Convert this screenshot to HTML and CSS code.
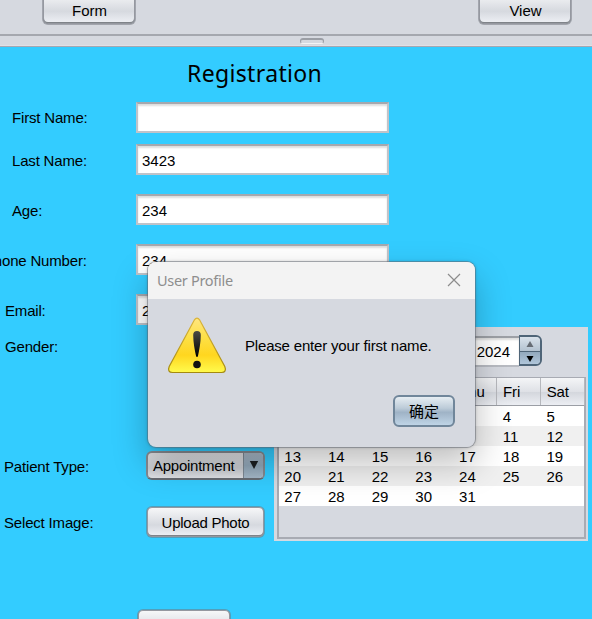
FILE: index.html
```
<!DOCTYPE html>
<html lang="en">
<head>
<meta charset="utf-8">
<title>Registration</title>
<link rel="stylesheet" href="styles.css">
</head>
<body>
<header class="toolbar">
  <button class="btn tool">Form</button>
  <button class="btn tool">View</button>
</header>
<div class="splitter"><span class="grip"></span></div>
<main class="form">
  <h1>Registration</h1>
  <div class="field first"><label class="in">First Name:</label><div class="input"></div></div>
  <div class="field last"><label class="in">Last Name:</label><div class="input">3423</div></div>
  <div class="field"><label class="in">Age:</label><div class="input">234</div></div>
  <div class="field"><label class="phone">Phone Number:</label><div class="input">234</div></div>
  <div class="field"><label class="email">Email:</label><div class="input">234</div></div>
  <div class="lower">
    <div class="options">
      <div class="option gender"><label>Gender:</label></div>
      <div class="option"><label>Patient Type:</label><div class="combo"><span>Appointment</span><i><svg width="10" height="10" viewBox="0 0 10 10"><path d="M.8 1h8.400L5 9z" fill="#1b1e22"/></svg></i></div></div>
      <div class="option photo"><label>Select Image:</label><button class="btn upload">Upload Photo</button></div>
    </div>
    <section class="calendar">
      <div class="year-row">
        <div class="year">2024</div>
        <div class="spinner">
          <span><svg width="8" height="6" viewBox="0 0 8 6"><path d="M4 0l3.500 6h-7z" fill="#666c74"/></svg></span>
          <span><svg width="8" height="6" viewBox="0 0 8 6"><path d="M4 6L.5 0h7z"/></svg></span>
        </div>
      </div>
      <div class="table">
        <div class="week head"><b></b><b></b><b></b><b></b><b>Thu</b><b>Fri</b><b>Sat</b></div>
        <div class="week"><b></b><b></b><b></b><b></b><b></b><b>4</b><b>5</b></div>
        <div class="week alt"><b></b><b></b><b></b><b></b><b></b><b>11</b><b>12</b></div>
        <div class="week"><b>13</b><b>14</b><b>15</b><b>16</b><b>17</b><b>18</b><b>19</b></div>
        <div class="week alt"><b>20</b><b>21</b><b>22</b><b>23</b><b>24</b><b>25</b><b>26</b></div>
        <div class="week"><b>27</b><b>28</b><b>29</b><b>30</b><b>31</b><b></b><b></b></div>
      </div>
    </section>
  </div>
  <button class="btn submit"></button>
</main>
<div class="dialog">
  <div class="titlebar"><span>User Profile</span><svg width="14" height="14" viewBox="0 0 14 14"><path d="M1 1l12 12M13 1L1 13" stroke="#8c8c8c" stroke-width="1.2" fill="none"/></svg></div>
  <div class="message">
    <svg width="60" height="58" viewBox="0 0 60 58">
      <defs>
        <linearGradient id="y" x1="0" y1="0" x2="0" y2="1"><stop offset="0" stop-color="#ffe680"/><stop offset=".35" stop-color="#fde047"/><stop offset=".68" stop-color="#ffd61f"/><stop offset="1" stop-color="#fffb4d"/></linearGradient>
        <linearGradient id="o" x1="0" y1="0" x2="0" y2="1"><stop offset="0" stop-color="#dcb53a"/><stop offset="1" stop-color="#a48a10"/></linearGradient>
        <linearGradient id="k" x1="0" y1="0" x2="0" y2="1"><stop offset="0" stop-color="#4b4a44"/><stop offset="1" stop-color="#000"/></linearGradient>
      </defs>
      <path d="M27.200 3.200Q30 -.8 32.800 3.200L57.800 49.500Q60 55.300 54.500 55.500H5.500Q0 55.300 2.200 49.500z" fill="url(#y)" stroke="url(#o)" stroke-width="1.2"/>
      <path d="M26.200 18Q26.200 14 30 14T33.800 18C33.800 26 32.200 33 30.800 39.800H29.200C27.800 33 26.200 26 26.200 18z" fill="url(#k)"/>
      <circle cx="30" cy="47.500" r="3.800" fill="#111"/>
    </svg>
    <p>Please enter your first name.</p>
  </div>
  <button class="ok">确定</button>
</div>
</body>
</html>
```
FILE: styles.css
```
* { box-sizing: border-box; }
body {
  margin: 0;
  height: 619px;
  overflow: hidden;
  background: #33ccff;
  font: 15px/20px "Liberation Sans", "Noto Sans CJK SC", sans-serif;
  color: #000;
}
label { letter-spacing: -.18px; }
.btn {
  font: inherit;
  color: #000;
  padding: 0;
  border: 1px solid rgba(110, 114, 122, .5);
  border-radius: 6px;
  background: linear-gradient(#f8f9fa, #e4e6ea 35%, #d6d9df 60%, #f0f2f7);
  background-clip: padding-box;
  box-shadow: inset 0 0 0 1px #9598a0, inset 0 -1px 0 1px #7f8389;
}
.toolbar {
  height: 34px;
  padding: 0 20px 0 42px;
  display: flex;
  justify-content: space-between;
  background: #d6d9e0;
}
.tool { width: 94px; height: 34px; margin-top: -9px; padding: 5px 0 0 1px; }
.splitter {
  height: 13px;
  display: flex;
  justify-content: center;
  padding: 4px 0 0 32px;
  background: #d6d9e0;
  border-top: 2px solid #a5a8af;
  border-bottom: 1px solid #a5a7b2;
  box-shadow: inset 0 -1px #e0e0e6;
}
.grip {
  width: 24px;
  height: 6px;
  margin-top: -2px;
  border: 1px solid #9b9ea5;
  border-top-width: 2px;
  border-bottom: 1px solid #f3f3f5;
  border-radius: 3px;
}
h1 {
  margin: 0;
  height: 55px;
  padding: 11px 0 0 187px;
  font: 400 23px/30px "Noto Sans", sans-serif;
  letter-spacing: .35px;
}
.field { display: flex; align-items: flex-start; height: 30px; margin-bottom: 20px; }
.first { margin-bottom: 12px; }
.field label { width: 136px; padding-top: 7px; white-space: nowrap; }
.first label { padding-top: 6px; }
.field .in { padding-left: 12px; }
.field .phone { padding-left: 0; text-indent: -16px; }
.field .email { padding-left: 5px; }
.input {
  width: 253px;
  height: 31px;
  padding: 5px 4px;
  background: #fff;
  border: 2px solid #c0c3c9;
  border-top-color: #a5a8ae;
  box-shadow: inset 0 2px 2px #ddd;
}
.lower { display: flex; height: 214px; margin-top: -17px; }
.options { width: 274px; padding-top: 10px; }
.option { display: flex; align-items: center; height: 30px; padding-left: 4px; margin-bottom: 26px; }
.option label { width: 142px; padding-top: 2px; }
.gender { height: 20px; margin-bottom: 94px; padding-left: 5px; }
.gender label { padding-top: 0; }
.combo, .upload { width: 119px; height: 32px; }
.upload { letter-spacing: -.25px; padding-top: 1px; }
.combo {
  height: 29px;
  display: flex;
  margin-top: -1px;
  border: 2px solid #85898f;
  border-bottom-color: #666b72;
  border-radius: 6px;
  overflow: hidden;
  background: linear-gradient(#dfe0e3, #c9ccd1 60%, #dfe1e5);
}
.combo span { flex: 1; padding: 3px 0 0 5px; letter-spacing: -.25px; }
.combo i { display: flex; width: 20px; padding: 7px 0 0 5px; background: linear-gradient(#a9b8c6, #91a7b9 50%, #a5b8c8); border-left: 1px solid #7e8994; }
.calendar { width: 314px; padding: 8px 2px 3px 3px; background: #d6d9e0; }
.year-row { display: flex; height: 33px; margin-left: 140px; }
.year { width: 102px; height: 31px; margin-top: 1px; padding: 4px 9px 0 0; text-align: right; background: #fff; border: 2px solid #b8bbc2; border-right: 0; border-top-color: #9da0a6; box-shadow: inset 0 2px 2px #ddd; }
.spinner { width: 23px; height: 31px; border: 2px solid #4f6578; border-left-width: 1px; border-radius: 0 6px 6px 0; overflow: hidden; }
.spinner span { display: flex; height: 14px; align-items: center; justify-content: center; background: linear-gradient(#d9e2eb, #b3c2d0); }
.spinner span + span { background: linear-gradient(#92a9bd, #b3c8dc); border-top: 1px solid #4f6578; }
.table { height: 162px; margin-top: 9px; border: 2px solid #a8abb3; border-width: 1px 2px 2px; }
.week { display: flex; height: 20px; background: #fff; }
.alt { background: #f0f0f0; }
.week b { flex: none; width: 43.700px; padding: 1px 0 0 5.300px; font-weight: 400; }
.head { height: 28px; background: linear-gradient(#f4f5f7, #dfe1e6 50%, #d3d6dc 51%, #eceef3); border-bottom: 1px solid #9b9ea5; }
.head b { padding-top: 4px; padding-left: 5.500px; border-right: 1px solid #b6b8bd; letter-spacing: -.1px; }
.submit { display: block; width: 94px; height: 34px; margin: 68px 0 0 137px; }
.dialog {
  position: absolute;
  left: 147px;
  top: 261px;
  width: 329px;
  height: 187px;
  border: 1px solid rgba(100, 105, 115, .5);
  border-radius: 9px;
  background: #d6d9e0;
  background-clip: padding-box;
  box-shadow: 0 16px 34px rgba(0, 0, 0, .25), 0 0 3px rgba(0, 0, 0, .15);
}
.titlebar {
  display: flex;
  justify-content: space-between;
  align-items: center;
  height: 37px;
  padding: 0 14px 1px 9px;
  border-radius: 8px 8px 0 0;
  background: #f3f3f3;
  color: #8e8e8e;
  font: 14.5px/20px "Noto Sans", sans-serif;
  letter-spacing: -.3px;
}
.message { display: flex; padding: 18px 0 0 19px; height: 97px; }
.message p { margin: 19px 0 0 18px; white-space: nowrap; letter-spacing: -.18px; }
.ok {
  display: block;
  width: 62px;
  height: 32px;
  margin-left: 245px;
  margin-top: -1px;
  padding: 0;
  border: 2px solid #70869a;
  border-radius: 6px;
  background: linear-gradient(#e6edf2, #bccbd8 40%, #9fb3c6 55%, #bfd4e6);
  font: 15px/24px "Noto Sans CJK SC", sans-serif;
  color: #000;
}
```
